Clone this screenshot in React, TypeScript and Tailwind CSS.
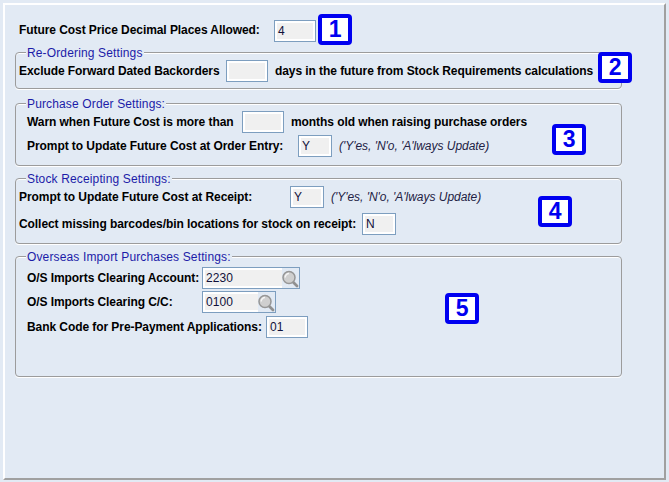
function Field({ value = "", w, className = "" }: { value?: string; w: string; className?: string }) {
  return (
    <div className={`${w} ${className} h-[22px] shrink-0 border border-[#7d9ebf] bg-[#f0f0f0] shadow-[inset_0_0_0_2px_#ffffff] flex items-center pl-[3px] text-[12px] tracking-[0.1px] text-[#10103a] font-normal`}>
      {value}
    </div>
  );
}

function Magnifier() {
  return (
    <svg width="17" height="18" viewBox="0 0 17 18" className="shrink-0">
      <path d="M10.5 11.5 L15 16" stroke="#909090" strokeWidth="2.8" strokeLinecap="round" />
      <circle cx="7" cy="7.5" r="6" fill="#cfcfcf" stroke="#969696" strokeWidth="1.5" />
      <path d="M3.2 7.5 A3.8 3.8 0 0 1 7 3.6" stroke="#f4f4f4" strokeWidth="1.5" fill="none" />
    </svg>
  );
}

function Lookup({ value, w, fill }: { value: string; w: string; fill: string }) {
  return (
    <div className={`${w} h-[22px] shrink-0 border border-[#7d9ebf] flex items-stretch`}>
      <div className={`${fill} bg-[#f0f0f0] shadow-[inset_2px_2px_0_#ffffff,inset_0_-2px_0_#ffffff] flex items-center pl-[3px] text-[12px] tracking-[0.1px] text-[#10103a] font-normal`}>
        {value}
      </div>
      <div className="flex-1 flex items-center justify-center pt-[1px]">
        <Magnifier />
      </div>
    </div>
  );
}

function Badge({ n, className = "" }: { n: string; className?: string }) {
  return (
    <div className={`${className} w-[34px] h-[31px] shrink-0 bg-white border-[4px] border-[#0000f0] rounded-[4px] flex items-center justify-center text-[#0000f0] text-[23px] font-bold leading-none`}>
      {n}
    </div>
  );
}

function Group({ title, h, mt, children }: { title: string; h: string; mt: string; children: React.ReactNode }) {
  return (
    <div className={`${h} ${mt} relative w-[607px] ml-[10px] rounded-[4px] border border-[#9c9c9c] shadow-[0_1px_0_#ffffff,inset_0_1px_0_#ffffff]`}>
      <div className="absolute left-[10px] top-[-7px] px-[1px] h-[14px] leading-[14px] bg-[#e2eaf4] text-[12px] tracking-[0.14px] font-normal text-[#1c1ca8] whitespace-nowrap">
        {title}
      </div>
      {children}
    </div>
  );
}

function Hint({ children, className = "" }: { children: React.ReactNode; className?: string }) {
  return <span className={`${className} italic font-normal text-[12px] tracking-[-0.03px] text-[#222244] whitespace-nowrap`}>{children}</span>;
}

export default function App() {
  return (
    <div className="w-[669px] h-[482px] bg-[#e2eaf4] pt-[3px] pl-[3px] pr-[3px] pb-[2px] font-['Liberation_Sans',Arial,sans-serif] text-[12px] tracking-[-0.07px] font-bold text-black whitespace-nowrap">
      <div className="h-full border-l-2 border-t-2 border-white border-r-2 border-b-2 border-r-[#a0a0a0] border-b-[#a0a0a0] overflow-hidden">
        <div className="flex items-center h-[31px] mt-[9px] ml-[14px]">
          <span className="w-[255px]">Future Cost Price Decimal Places Allowed:</span>
          <Field value="4" w="w-[42px]" className="mt-[3px]" />
          <Badge n="1" className="ml-[2px]" />
        </div>

        <Group title="Re-Ordering Settings" h="h-[37px]" mt="mt-[7px]">
          <div className="flex items-center ml-[3px] mt-[7px]">
            <span className="w-[207px]">Exclude Forward Dated Backorders</span>
            <Field w="w-[42px]" />
            <span className="ml-[7px]">days in the future from Stock Requirements calculations</span>
          </div>
          <Badge n="2" className="absolute left-[582px] top-[-1px]" />
        </Group>

        <Group title="Purchase Order Settings:" h="h-[63px]" mt="mt-[14px]">
          <div className="flex items-center ml-[11px] mt-[7px]">
            <span className="w-[215px]">Warn when Future Cost is more than</span>
            <Field w="w-[42px]" />
            <span className="ml-[7px]">months old when raising purchase orders</span>
          </div>
          <div className="flex items-center ml-[11px] mt-[2px]">
            <span className="w-[271px]">Prompt to Update Future Cost at Order Entry:</span>
            <Field value="Y" w="w-[34px]" />
            <Hint className="ml-[7px]">('Y'es, 'N'o, 'A'lways Update)</Hint>
          </div>
          <Badge n="3" className="absolute left-[536px] top-[20px]" />
        </Group>

        <Group title="Stock Receipting Settings:" h="h-[66px]" mt="mt-[12px]">
          <div className="flex items-center ml-[3px] mt-[7px]">
            <span className="w-[271px]">Prompt to Update Future Cost at Receipt:</span>
            <Field value="Y" w="w-[34px]" />
            <Hint className="ml-[7px]">('Y'es, 'N'o, 'A'lways Update)</Hint>
          </div>
          <div className="flex items-center ml-[3px] mt-[5px]">
            <span className="w-[343px]">Collect missing barcodes/bin locations for stock on receipt:</span>
            <Field value="N" w="w-[34px]" />
          </div>
          <Badge n="4" className="absolute left-[522px] top-[17px]" />
        </Group>

        <Group title="Overseas Import Purchases Settings:" h="h-[121px]" mt="mt-[12px]">
          <div className="flex items-center ml-[11px] mt-[10px]">
            <span className="w-[175px]">O/S Imports Clearing Account:</span>
            <Lookup value="2230" w="w-[98px]" fill="w-[80px]" />
          </div>
          <div className="flex items-center ml-[11px] mt-[2px]">
            <span className="w-[175px]">O/S Imports Clearing C/C:</span>
            <Lookup value="0100" w="w-[74px]" fill="w-[56px]" />
          </div>
          <div className="flex items-center ml-[11px] mt-[3px]">
            <span className="w-[239px]">Bank Code for Pre-Payment Applications:</span>
            <Field value="01" w="w-[42px]" />
          </div>
          <Badge n="5" className="absolute left-[429px] top-[36px]" />
        </Group>
      </div>
    </div>
  );
}
